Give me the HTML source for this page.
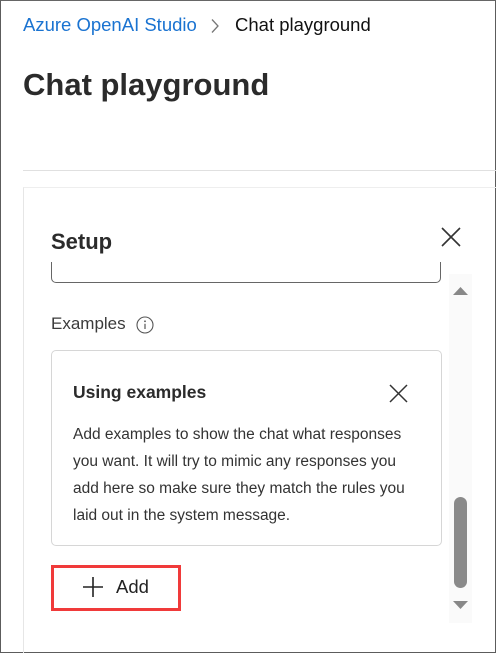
<!DOCTYPE html>
<html><head><meta charset="utf-8"><style>
*{margin:0;padding:0;box-sizing:border-box}
body{width:496px;height:653px;overflow:hidden;background:#fff;font-family:"Liberation Sans",sans-serif;position:relative;color:#242424}
.frame{position:absolute;left:0;top:0;width:496px;height:653px;border:1px solid #5c5c5c;border-top-color:#666}
.abs{position:absolute;white-space:nowrap}
</style></head><body>
<div class="frame"></div>
<div class="abs" style="left:23px;top:14px;font-size:18.5px;color:#1a73d1">Azure OpenAI Studio</div>
<svg class="abs" style="left:210px;top:18px" width="10" height="16" viewBox="0 0 10 16"><path d="M2 1.5 L8 8 L2 14.5" fill="none" stroke="#777" stroke-width="1.3"/></svg>
<div class="abs" style="left:235px;top:14px;font-size:18.5px;color:#111">Chat playground</div>
<div class="abs" style="left:23px;top:67px;font-size:31px;font-weight:bold;color:#2b2b2b">Chat playground</div>
<div class="abs" style="left:23px;top:170px;width:473px;height:1px;background:#e0e0e0"></div>
<div class="abs" style="left:23px;top:187px;width:473px;height:466px;border-left:1px solid #e6e6e6;border-top:1px solid #eee"></div>
<div class="abs" style="left:51px;top:229px;font-size:22px;font-weight:bold;color:#2b2b2b">Setup</div>
<svg class="abs" style="left:441px;top:227px" width="20" height="20" viewBox="0 0 20 20"><path d="M1 1L19 19M19 1L1 19" stroke="#333" stroke-width="1.6"/></svg>
<div class="abs" style="left:51px;top:262px;width:390px;height:21px;border:1px solid #666;border-top:none;border-radius:0 0 5px 5px"></div>
<div class="abs" style="left:449px;top:274px;width:23px;height:349px;background:#fafafa"></div>
<svg class="abs" style="left:453px;top:286px" width="16" height="10"><path d="M0 9L7.5 1L15 9Z" fill="#888"/></svg>
<div class="abs" style="left:454px;top:497px;width:13px;height:91px;background:#8a8a8a;border-radius:7px"></div>
<svg class="abs" style="left:453px;top:600px" width="16" height="10"><path d="M0 1L7.5 9L15 1Z" fill="#888"/></svg>
<div class="abs" style="left:51px;top:314px;font-size:17px;color:#3b3b3b">Examples</div>
<svg class="abs" style="left:135px;top:315px" width="20" height="20" viewBox="0 0 20 20"><circle cx="10" cy="10" r="8" fill="none" stroke="#555" stroke-width="1.1"/><circle cx="10" cy="6.3" r="0.9" fill="#555"/><path d="M10 8.8V14" stroke="#555" stroke-width="1.2"/></svg>
<div class="abs" style="left:51px;top:350px;width:391px;height:196px;border:1px solid #d6d6d6;border-radius:5px"></div>
<div class="abs" style="left:73px;top:382px;font-size:17.5px;font-weight:bold;color:#2b2b2b">Using examples</div>
<svg class="abs" style="left:389px;top:384px" width="19" height="19" viewBox="0 0 19 19"><path d="M1 1L18 18M18 1L1 18" stroke="#333" stroke-width="1.5"/></svg>
<div class="abs" style="left:73px;top:421px;font-size:15.5px;line-height:27px;color:#333">Add examples to show the chat what responses<br>you want. It will try to mimic any responses you<br>add here so make sure they match the rules you<br>laid out in the system message.</div>
<div class="abs" style="left:51px;top:565px;width:130px;height:46px;border:3px solid #f03a3a"></div>
<svg class="abs" style="left:83px;top:577px" width="20" height="20" viewBox="0 0 20 20"><path d="M10 0V20M0 10H20" stroke="#222" stroke-width="1.6"/></svg>
<div class="abs" style="left:116px;top:576px;font-size:18.5px;color:#222">Add</div>
</body></html>
